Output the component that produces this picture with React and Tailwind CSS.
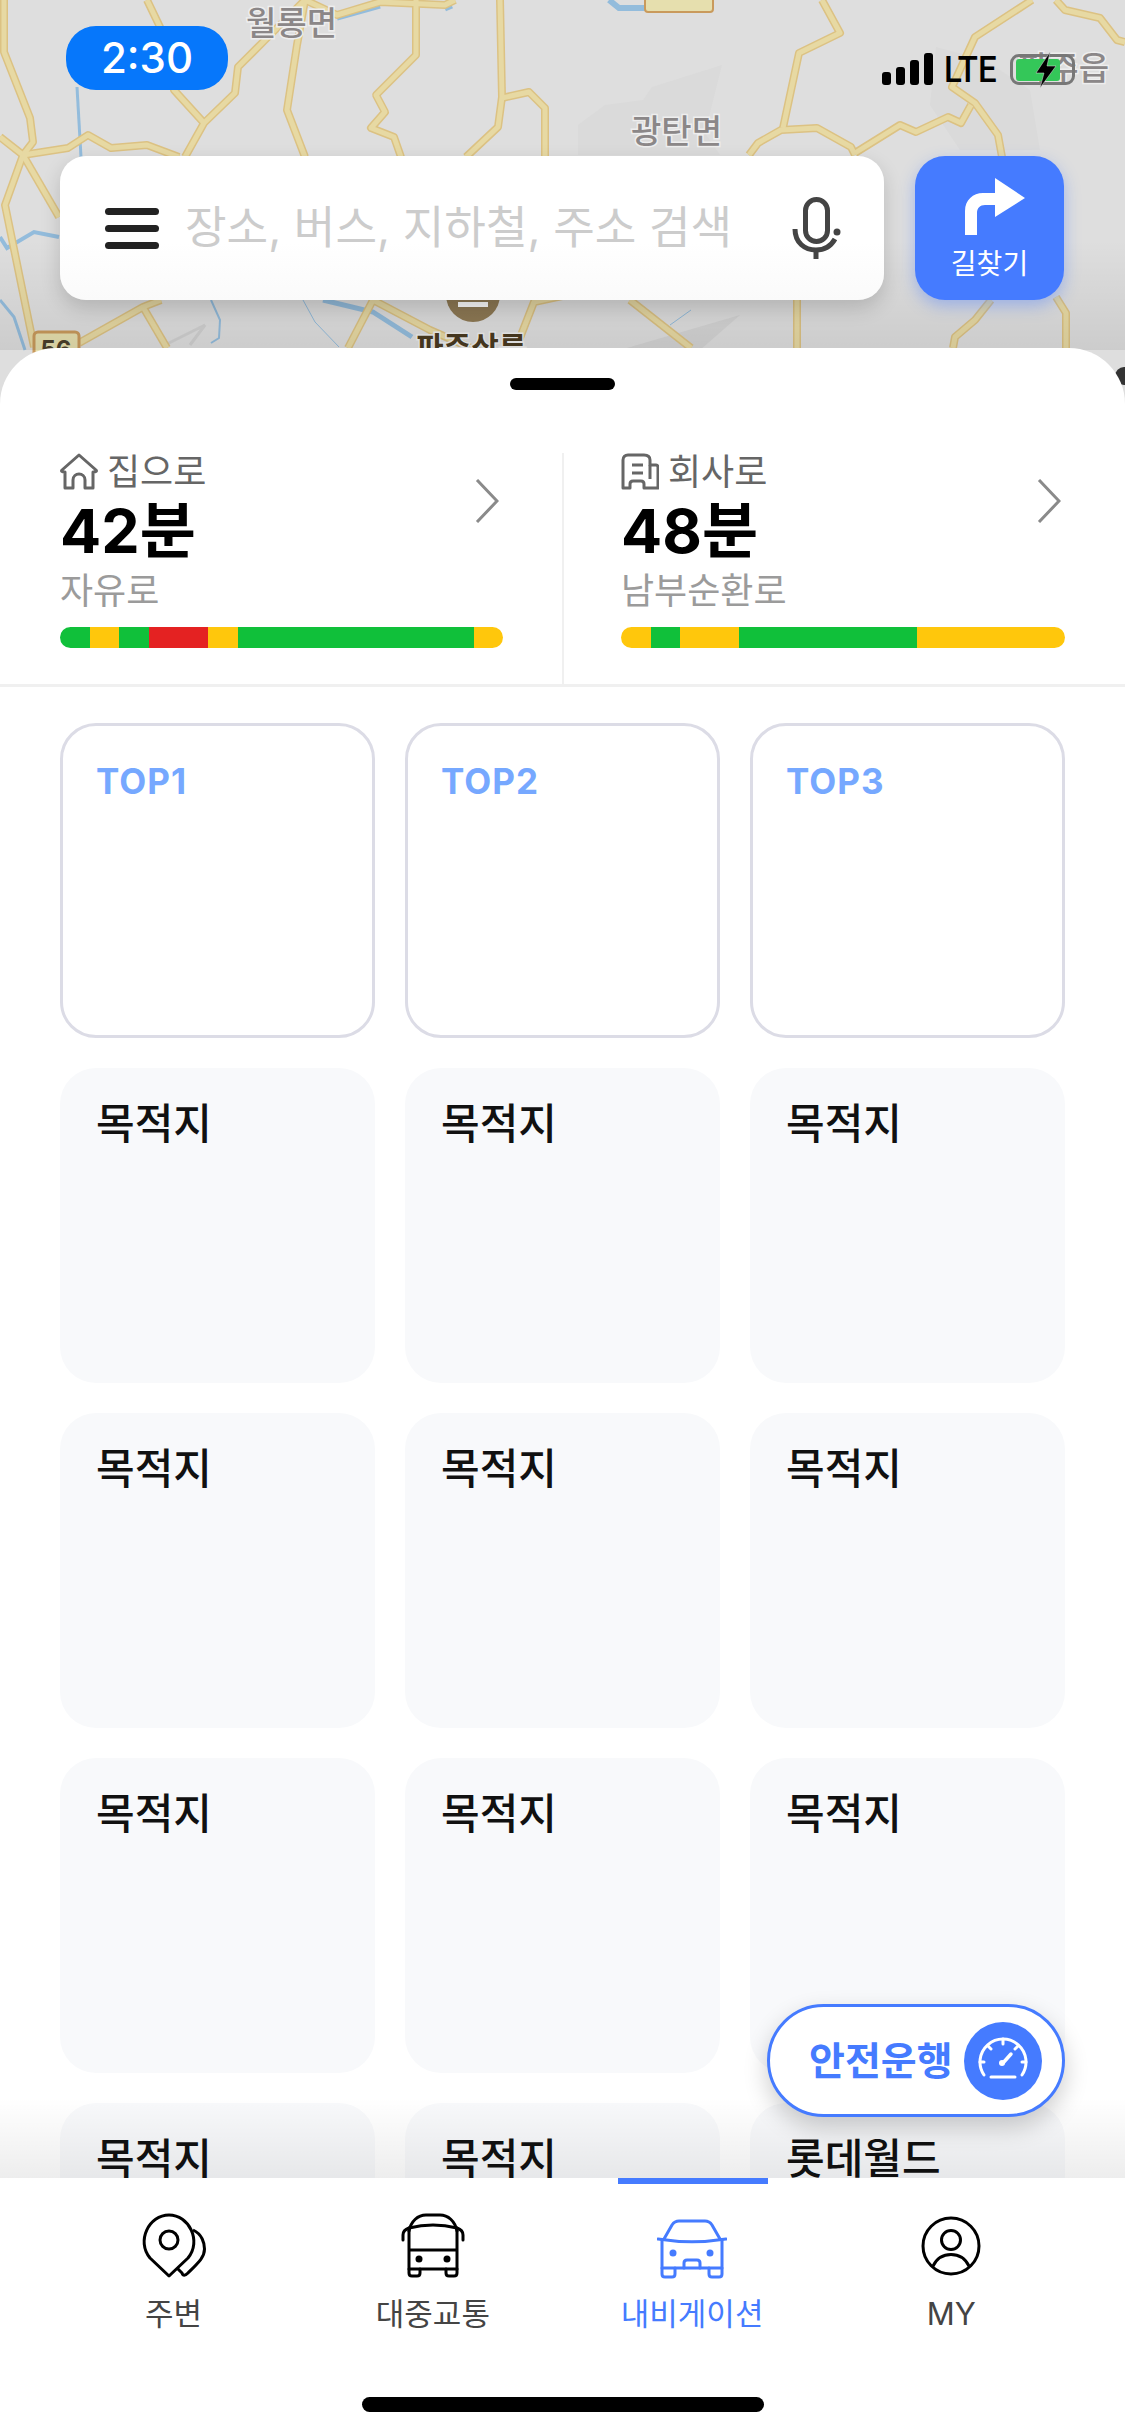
import React from 'react';

const ROADS = [
  '4,0 4,52 30,118 33,142 23,155',
  '0,137 23,155',
  '23,155 68,148 88,135 111,148 147,145 179,157',
  '23,155 5,205 34,347',
  '23,155 59,217',
  '147,0 160,27 174,90 204,123',
  '305,0 265,40 238,67 235,93 204,123 185,157',
  '305,0 297,45 287,110 305,157',
  '305,0 337,15 380,2 445,5 455,0',
  '416,0 416,55 376,95 385,112 371,128 394,137 401,157',
  '500,0 502,97 498,127 466,157',
  '502,98 529,92 545,108 545,157',
  '161,300 143,307 79,343',
  '143,307 167,348',
  '373,300 348,348',
  '373,300 430,330 480,352',
  '562,296 534,302 516,348',
  '822,0 840,33 799,53 783,128',
  '749,155 758,143 781,130 817,128 851,147 855,155',
  '855,153 900,125 916,132 948,117 961,123 971,105',
  '1032,0 975,37 952,87 975,103 998,135 1002,157',
  '1056,0 1065,10 1100,18 1117,40 1125,42',
  '630,300 691,348',
  '797,300 797,348',
  '991,300 975,320 955,337 953,348',
  '1056,297 1066,313 1066,348',
];

const WATER = [
  ['77,87 81,157', 3],
  ['0,237 7,248 34,232 59,237', 4],
  ['0,300 14,317 25,350', 3],
  ['211,300 220,320 219,338 211,343', 2],
  ['303,300 315,322 339,347', 1],
  ['323,300 373,312 412,337', 5],
  ['337,18 380,6', 5],
  ['445,9 452,6', 5],
  ['609,0 619,8 645,8', 6],
  ['670,325 691,310', 1],
];

const ROWS = [
  ['목적지', '목적지', '목적지'],
  ['목적지', '목적지', '목적지'],
  ['목적지', '목적지', '목적지'],
  ['목적지', '목적지', '롯데월드'],
];

const MapBackground = () => (
  <svg className="absolute left-0 top-0 h-[420px] w-[1125px]" viewBox="0 0 1125 420">
    <defs>
      <linearGradient id="mapShade" x1="0" y1="0" x2="0" y2="1">
        <stop offset="0" stopColor="#000" stopOpacity="0" />
        <stop offset="1" stopColor="#000" stopOpacity="0.08" />
      </linearGradient>
    </defs>
    <rect width="1125" height="420" fill="#dedede" />
    <polygon points="578,125 605,105 643,100 652,87 722,65 705,133 720,155 578,155" fill="#dadada" />
    <polygon points="930,105 936,47 985,60 1030,90 1040,150 960,150" fill="#dadada" />
    <polygon points="620,350 740,315 700,350" fill="#d4d4d4" />
    <polyline points="165,345 205,325 190,345" fill="none" stroke="#d0d0d0" strokeWidth="3" />
    {WATER.map(([points, width], i) => (
      <polyline key={i} points={points} fill="none" stroke="#93bcdc" strokeWidth={width} />
    ))}
    {ROADS.map((points, i) => (
      <polyline key={i} points={points} fill="none" stroke="#dcc283" strokeWidth="8" strokeLinejoin="round" />
    ))}
    {ROADS.map((points, i) => (
      <polyline key={i} points={points} fill="none" stroke="#e7d9a3" strokeWidth="5" strokeLinejoin="round" />
    ))}
    <rect x="645" y="-8" width="68" height="20" rx="3" fill="#e6dfae" stroke="#c99a5c" strokeWidth="2" />
    <rect x="34" y="332" width="45" height="30" rx="4" fill="#e6dfae" stroke="#c99a5c" strokeWidth="3" />
    <text x="56" y="358" textAnchor="middle" fontSize="24" fontWeight="700" fill="#4a3f2a">56</text>
    <circle cx="473" cy="295" r="27" fill="#8f7a55" />
    <rect x="458" y="302" width="30" height="5" fill="#fff" />
    <g fontSize="33" fontWeight="500" fill="#8b8788" stroke="#eeeeee" strokeWidth="3" paintOrder="stroke">
      <text x="246" y="35">월롱면</text>
      <text x="631" y="143">광탄면</text>
      <text x="1018" y="80">파주읍</text>
    </g>
    <text x="416" y="358" fontSize="30" fontWeight="700" fill="#4a3a20" stroke="#eeeeee" strokeWidth="3" paintOrder="stroke">파주삼릉</text>
    <rect width="1125" height="110" y="240" fill="url(#mapShade)" />
    <circle cx="1124" cy="376" r="9" fill="#333" />
  </svg>
);

const StatusIcons = () => (
  <div className="mt-[27px] flex h-[32px] items-end">
    <div className="flex items-end gap-[5px]">
      <span className="h-[13px] w-[9px] rounded-[3px] bg-black" />
      <span className="h-[18px] w-[9px] rounded-[3px] bg-black" />
      <span className="h-[25px] w-[9px] rounded-[3px] bg-black" />
      <span className="h-[32px] w-[9px] rounded-[3px] bg-black" />
    </div>
    <span className="ml-[11px] w-[54px] scale-y-[1.1] whitespace-nowrap text-[33px] font-medium leading-[30px] [font-family:Roboto,sans-serif]">LTE</span>
    <div className="relative ml-[12px] flex h-[31px] w-[65px] items-center rounded-[9px] border-[3px] border-[#777] pl-[3px]">
      <span className="h-[22px] w-[44px] rounded-[3px] bg-[#34c759]" />
      <svg className="absolute left-[21px] top-[-5px] h-[36px] w-[24px]" viewBox="0 0 24 36">
        <path d="M16 0 2 21h8L6 36 22 14h-9z" fill="#000" stroke="#dedede" strokeWidth="0.5" />
      </svg>
    </div>
  </div>
);

const SearchBar = () => (
  <div className="flex h-[144px] flex-1 items-center rounded-[26px] bg-gradient-to-b from-white from-60% to-[#fafafa] pl-[45px] shadow-[0_8px_20px_rgba(0,0,0,0.16)]">
    <div className="flex w-[54px] flex-col gap-[10px]">
      <span className="h-[7px] rounded-full bg-[#222]" />
      <span className="h-[7px] rounded-full bg-[#222]" />
      <span className="h-[7px] rounded-full bg-[#222]" />
    </div>
    <span className="ml-[26px] w-[607px] whitespace-nowrap text-[45.2px] leading-[60px] text-[#cccccc]">장소, 버스, 지하철, 주소 검색</span>
    <svg className="h-[62px] w-[50px]" viewBox="0 0 50 62" fill="none" stroke="#444" strokeWidth="5">
      <rect x="13.5" y="2.5" width="22" height="42" rx="11" />
      <path d="M3 32c0 14 10 21 21 21 9 0 15-4 19-11" />
      <path d="M24 52v10" />
      <circle cx="45" cy="35" r="3.5" fill="#444" stroke="none" />
    </svg>
  </div>
);

const RouteButton = () => (
  <div className="flex h-[144px] w-[149px] flex-col items-center rounded-[30px] bg-[#457bff] shadow-[0_6px_16px_rgba(69,123,255,0.4)]">
    <svg className="ml-[11px] mt-[22px] h-[58px] w-[60px]" viewBox="0 0 60 58" fill="#fff">
      <path d="M0 57V33C0 22 8 15 18 15H30V0L60 20 30 39V27H20C15 27 12 30 12 35V57Z" />
    </svg>
    <span className="mt-[11px] text-[28px] leading-[34px] text-white">길찾기</span>
  </div>
);

const HomeIcon = () => (
  <svg className="h-[37px] w-[38px]" viewBox="0 0 38 37" fill="none" stroke="#666" strokeWidth="3" strokeLinejoin="round">
    <path d="M19 2 2 17c-1 1-.5 2 3 2v16h8v-8c0-8 12-8 12 0v8h8V19c3.500 0 4-1 3-2Z" />
  </svg>
);

const OfficeIcon = () => (
  <svg className="h-[37px] w-[38px]" viewBox="0 0 38 37" fill="none" stroke="#666" strokeWidth="3" strokeLinejoin="round">
    <path d="M2 35V7c0-3 2-5 5-5h16c4 0 6 2 6 5v5h6c1 0 2 1 2 2v21H23v-4c0-2-1-3-3-3h-8c-2 0-3 1-3 3v4Z" />
    <path d="M11 12h11M11 20h11M29 12v14" />
  </svg>
);

const Commute = ({ icon, label, time, road, segments, border }) => (
  <div className={`pb-[36px] ${border ? 'flex-1 border-l-[2px] border-[#f0f0f0] pl-[57px] pr-[60px]' : 'w-[562px] pl-[60px] pr-[59px]'}`}>
    <div className="flex items-start justify-between">
      <div>
        <div className="flex h-[37px] items-center gap-[9px] text-[36px] leading-[37px] text-[#666]">
          {icon}
          <span className="mt-[2px]">{label}</span>
        </div>
        <div className="mt-[5px] text-[61px] font-bold leading-[72px] text-black">{time}</div>
        <div className="mt-[2px] text-[36px] leading-[44px] text-[#9b9b9b]">{road}</div>
      </div>
      <svg className="mr-[4px] mt-[26px] h-[44px] w-[24px]" viewBox="0 0 24 44" fill="none" stroke="#8a8a8a" strokeWidth="3">
        <path d="M2 1l20 21L2 43" />
      </svg>
    </div>
    <div className="mt-[14px] flex h-[21px] overflow-hidden rounded-full">{segments}</div>
  </div>
);

const Green = ({ className }) => <span className={`bg-[#10c03a] ${className}`} />;
const Yellow = ({ className }) => <span className={`bg-[#ffc70c] ${className}`} />;
const Red = ({ className }) => <span className={`bg-[#e42222] ${className}`} />;

const TopCard = ({ rank }) => (
  <div className="h-[315px] rounded-[36px] border-[3px] border-[#dcdce6] bg-white pl-[33px] pt-[33px]">
    <span className="text-[35px] font-bold leading-[44px] tracking-[1px] text-[#76a8ff]">{rank}</span>
  </div>
);

const PlaceCard = ({ name }) => (
  <div className="h-[315px] rounded-[36px] bg-[#f8f9fb] pl-[36px] pt-[28px]">
    <span className="text-[42px] font-medium leading-[56px] text-[#111]">{name}</span>
  </div>
);

const PinIcon = () => (
  <svg className="h-[66px] w-[66px]" viewBox="0 0 66 66" fill="none" stroke="#000" strokeWidth="3" strokeLinejoin="round">
    <path d="M28 63 9 45C-5 28 8 2 28 2s33 26 19 43Z" />
    <circle cx="28" cy="27" r="9" />
    <path d="M52 17c9 4 11.500 13 11.500 19 0 8-5.500 13-16.500 24-3 3-5 3-6 0l-5-5" />
  </svg>
);

const BusIcon = () => (
  <svg className="h-[66px] w-[66px]" viewBox="0 0 66 66" fill="none" stroke="#000" strokeWidth="3" strokeLinecap="round" strokeLinejoin="round">
    <path d="M9 18C11 8 18 2 26 2h14c8 0 15 6 17 16" />
    <path d="M3 27v-5c0-4 3-6 6-7 16-4 32-4 48 0 3 1 6 3 6 7v5" />
    <path d="M9 15v41h48V15M9 37h48" />
    <path d="M9 56v4c0 2 1 3 3 3h5c2 0 3-1 3-3v-4M46 56v4c0 2 1 3 3 3h5c2 0 3-1 3-3v-4" />
    <circle cx="19" cy="46" r="3.500" fill="#000" stroke="none" />
    <circle cx="47" cy="46" r="3.500" fill="#000" stroke="none" />
  </svg>
);

const CarIcon = () => (
  <svg className="h-[60px] w-[70px]" viewBox="0 0 70 60" fill="none" stroke="#457bff" strokeWidth="3" strokeLinecap="round" strokeLinejoin="round">
    <path d="M7 20 15 6c2-3 4-4 7-4h26c3 0 5 1 7 4l8 14" />
    <path d="M1 20c22 3.500 46 3.500 68 0" />
    <path d="M5 21v28h60V21" />
    <path d="M5 49v6c0 2 1 3 3 3h7c2 0 3-1 3-3v-6M52 49v6c0 2 1 3 3 3h7c2 0 3-1 3-3v-6" />
    <path d="M27 49v-5c0-2 1-3 3-3h10c2 0 3 1 3 3v5" />
    <circle cx="16" cy="34" r="3.500" fill="#457bff" stroke="none" />
    <circle cx="53" cy="34" r="3.500" fill="#457bff" stroke="none" />
  </svg>
);

const PersonIcon = () => (
  <svg className="mb-[3px] h-[60px] w-[60px]" viewBox="0 0 60 60" fill="none" stroke="#000" strokeWidth="3">
    <circle cx="30" cy="30" r="28" />
    <circle cx="30" cy="24" r="9.500" />
    <path d="M12 50c4-8 11-11.500 18-11.500S44 42 48 50" />
  </svg>
);

const SpeedIcon = () => (
  <svg className="h-[78px] w-[78px]" viewBox="0 0 78 78" fill="none" stroke="#fff" strokeWidth="3" strokeLinecap="round">
    <path d="M20 53A23 23 0 1 1 58 53" />
    <path d="M27 55h24M39 17v5M24 24l3 3M54 24l-3 3M16 40h4M62 40h-4" />
    <path d="M39 41 47 32" strokeWidth="3.500" />
    <circle cx="38" cy="41" r="3" fill="#fff" stroke="none" />
  </svg>
);

const TABS = [
  { label: '주변', icon: <PinIcon /> },
  { label: '대중교통', icon: <BusIcon /> },
  { label: '내비게이션', icon: <CarIcon />, active: true },
  { label: 'MY', icon: <PersonIcon /> },
];

const App = () => {
  return (
    <div className="relative h-[2436px] w-[1125px] overflow-hidden bg-white [font-family:Inter,'Noto_Sans_CJK_KR',sans-serif]">
      <header className="relative h-[348px]">
        <MapBackground />
        <div className="relative pt-[26px]">
          <div className="flex items-start justify-between pl-[66px] pr-[50px]">
            <div className="flex h-[64px] w-[162px] items-center justify-center rounded-[30px] bg-[#0677fb] text-[42px] font-medium leading-[50px] text-white">2:30</div>
            <StatusIcons />
          </div>
          <div className="mt-[66px] flex gap-[31px] pl-[60px] pr-[61px]">
            <SearchBar />
            <RouteButton />
          </div>
        </div>
      </header>

      <main className="relative h-[2088px] rounded-t-[56px] bg-white">
        <div className="flex justify-center pt-[30px]">
          <span className="h-[12px] w-[105px] rounded-full bg-black" />
        </div>
        <div className="mt-[63px] flex border-b-[3px] border-[#f0f0f0]">
          <Commute
            icon={<HomeIcon />}
            label="집으로"
            time="42분"
            road="자유로"
            segments={
              <>
                <Green className="w-[30px]" />
                <Yellow className="w-[29px]" />
                <Green className="w-[30px]" />
                <Red className="w-[59px]" />
                <Yellow className="w-[30px]" />
                <Green className="w-[236px]" />
                <Yellow className="flex-1" />
              </>
            }
          />
          <Commute
            border
            icon={<OfficeIcon />}
            label="회사로"
            time="48분"
            road="남부순환로"
            segments={
              <>
                <Yellow className="w-[30px]" />
                <Green className="w-[29px]" />
                <Yellow className="w-[59px]" />
                <Green className="w-[178px]" />
                <Yellow className="flex-1" />
              </>
            }
          />
        </div>
        <div className="mt-[36px] grid grid-cols-3 gap-[30px] px-[60px] pb-[36px]">
          <TopCard rank="TOP1" />
          <TopCard rank="TOP2" />
          <TopCard rank="TOP3" />
          {ROWS.flat().map((name, i) => (
            <PlaceCard key={i} name={name} />
          ))}
        </div>
      </main>

      <div className="absolute bottom-[258px] left-0 h-[80px] w-full bg-gradient-to-b from-transparent to-black/[0.07]" />

      <button className="absolute right-[60px] top-[2004px] flex h-[113px] w-[298px] items-center rounded-full border-[3px] border-[#457bff] bg-white pl-[39px] shadow-[0_10px_24px_rgba(0,0,0,0.2)]">
        <span className="text-[39px] font-bold leading-[50px] text-[#457bff]">안전운행</span>
        <span className="absolute left-[194px] top-[15px] h-[78px] w-[78px] rounded-full bg-[#457bff]">
          <SpeedIcon />
        </span>
      </button>

      <nav className="absolute bottom-0 left-0 h-[258px] w-full bg-white">
        <div className="flex px-[44px]">
          {TABS.map(tab => (
            <div key={tab.label} className="relative flex h-[258px] flex-1 flex-col items-center pt-[35px]">
              {tab.active && <span className="absolute left-[55px] top-0 h-[6px] w-[150px] bg-[#457bff]" />}
              <div className="flex h-[66px] items-end justify-center">{tab.icon}</div>
              <span className={`mt-[15px] text-[31px] leading-[40px] ${tab.active ? 'text-[#457bff]' : 'text-[#444]'}`}>{tab.label}</span>
            </div>
          ))}
        </div>
        <span className="absolute bottom-[24px] left-[362px] h-[15px] w-[402px] rounded-full bg-black" />
      </nav>
    </div>
  );
};

export default App;
